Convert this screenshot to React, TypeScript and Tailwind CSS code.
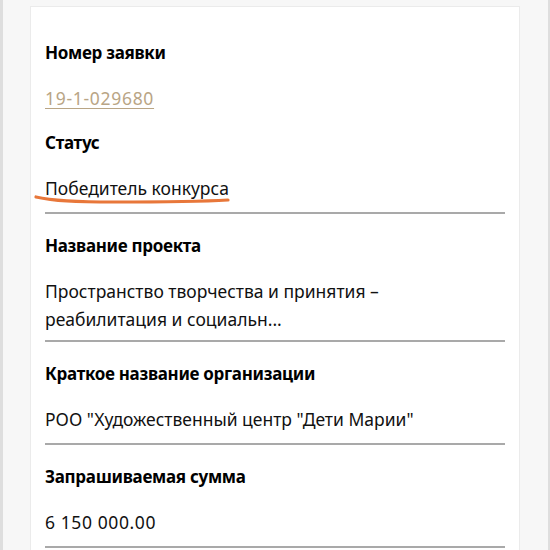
import React from "react";

const Divider = () => <div className="h-[2px] bg-[#a9a9a9]" />;

const Field = ({
  label,
  children,
  className = "",
}: {
  label: string;
  children: React.ReactNode;
  className?: string;
}) => (
  <div className={className}>
    <p className="font-bold leading-[28px] text-[17px] tracking-[-0.3px] text-black">{label}</p>
    <div className="mt-[17px] leading-[28px] text-[17.5px] text-[#111]">{children}</div>
  </div>
);

export default function App() {
  return (
    <div
      className="w-[550px] h-[550px] overflow-hidden bg-[#f7f7f7] border-l-[3px] border-r-[2px] border-[#dedede] flex"
      style={{ fontFamily: '"Noto Sans", "Open Sans", sans-serif' }}
    >
      <div className="relative ml-[27px] mt-[6px] w-[490px] bg-white border border-b-0 border-[#ebebeb] px-[14px] pt-[32px]">
        <Field label="Номер заявки">
          <a
            href="#"
            className="text-[#b9a585] tracking-[0.7px] underline underline-offset-[3px] decoration-1"
          >
            19-1-029680
          </a>
        </Field>
        <Field label="Статус" className="mt-[17px] pb-[10px]">
          Победитель конкурса
        </Field>
        {/* hand-drawn highlight under the status */}
        <svg
          className="absolute left-[3px] top-[188px]"
          width="200"
          height="12"
          viewBox="0 0 200 12"
          fill="none"
        >
          <path
            d="M2 2 C 20 6, 40 7, 80 7 S 160 7, 194 5"
            stroke="#e8773a"
            strokeWidth="3.2"
            strokeLinecap="round"
          />
        </svg>
        <Divider />
        <Field label="Название проекта" className="pt-[18px] pb-[7px]">
          <div>Пространство творчества и принятия –</div>
          <div>реабилитация и социальн...</div>
        </Field>
        <Divider />
        <Field label="Краткое название организации" className="pt-[18px] pb-[10px]">
          РОО "Художественный центр "Дети Марии"
        </Field>
        <Divider />
        <Field label="Запрашиваемая сумма" className="pt-[18px] pb-[10px]">
          <span className="tracking-[0.6px]">6 150 000.00</span>
        </Field>
        <Divider />
      </div>
    </div>
  );
}
